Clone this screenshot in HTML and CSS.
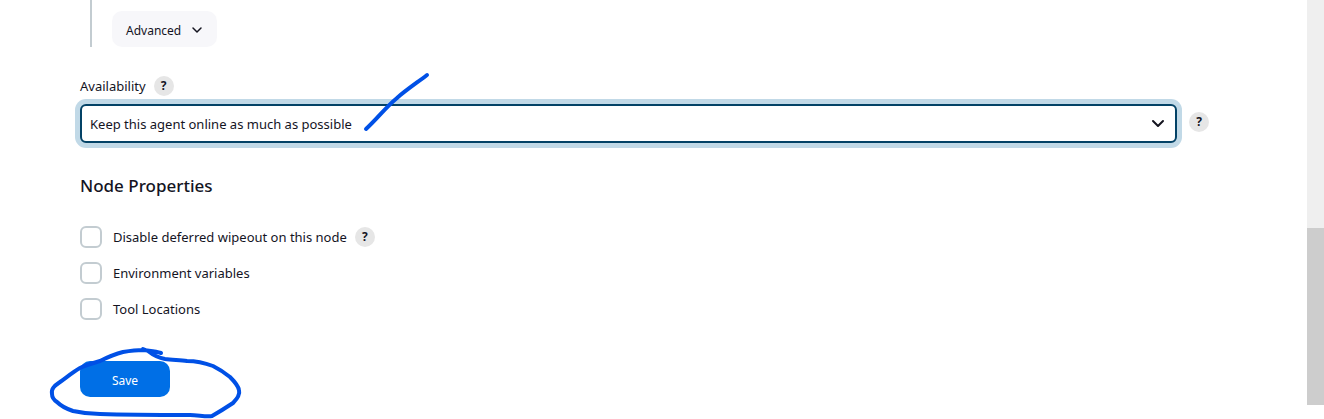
FILE: index.html
```html
<!DOCTYPE html>
<html lang="en">
<head>
<meta charset="utf-8">
<meta name="viewport" content="width=device-width, initial-scale=1">
<title>Configure node</title>
<link rel="stylesheet" href="styles.css">
</head>
<body>
<div class="page">
  <main class="content">
    <form class="form">
      <div class="nested">
        <button type="button" class="button-advanced">Advanced
          <svg class="chevron" viewBox="0 0 12 12" width="12" height="12" aria-hidden="true"><path d="M2 3l4 4 4-4"/></svg>
        </button>
      </div>

      <div class="label-row">
        <label for="availability">Availability</label>
        <button type="button" class="help" aria-label="Help for Availability">?</button>
      </div>
      <div class="select-row">
        <div class="select-wrap">
          <select id="availability" class="select">
            <option>Keep this agent online as much as possible</option>
          </select>
          <svg class="select-arrow" viewBox="0 0 14 14" width="14" height="14" aria-hidden="true"><path d="M2 4l5 5 5-5"/></svg>
        </div>
        <button type="button" class="help" aria-label="Help for this option">?</button>
        <svg class="ink ink-tick" viewBox="0 0 70 60" width="70" height="60" aria-hidden="true"><path d="M6 56C18 45 25 35 37 25C46 17 58 9 67 2"/></svg>
      </div>

      <h2 class="heading">Node Properties</h2>
      <div class="checks">
        <div class="check-row">
          <input type="checkbox" id="wipeout" class="checkbox">
          <label for="wipeout">Disable deferred wipeout on this node</label>
          <button type="button" class="help" aria-label="Help for Disable deferred wipeout">?</button>
        </div>
        <div class="check-row">
          <input type="checkbox" id="env" class="checkbox">
          <label for="env">Environment variables</label>
        </div>
        <div class="check-row">
          <input type="checkbox" id="tools" class="checkbox">
          <label for="tools">Tool Locations</label>
        </div>
      </div>

      <div class="actions">
        <button type="submit" class="button-save">Save</button>
        <svg class="ink ink-loop" viewBox="0 0 200 72" width="200" height="72" aria-hidden="true"><path d="M120 7C114 5 108 5 102 4C95 4 88 5 82 6C74 8 67 11 59 15C52 17 45 19 39 22C32 26 26 31 19 36C13 40 10 43 11 48C11 51 13 54 16 56C21 61 26 63 32 65C41 67 50 68 59 68C89 69 119 69 149 69C157 69 165 71 171 70C178 66 186 61 192 57C197 52 199 48 198 44C197 39 193 35 189 31C184 27 178 23 172 20C164 17 155 15 146 15C139 14 131 14 124 13C118 12 112 9 107 5L102 3"/></svg>
      </div>
    </form>
  </main>
  <div class="scrollbar" aria-hidden="true"><div class="scroll-thumb"></div></div>
</div>
</body>
</html>
```
FILE: styles.css
```css
* { box-sizing: border-box; }
body {
  margin: 0;
  background: #fff;
  color: #14141f;
  font: 13px/20px "Noto Sans", "Open Sans", sans-serif;
}
button, select { font: inherit; color: inherit; }
.page { display: flex; align-items: flex-start; min-height: 100vh; overflow: hidden; }
.content { flex: 1; min-width: 0; padding: 0 98px 22px 80px; }
.nested {
  margin-left: 10px;
  padding: 11px 0 0 20px;
  border-left: 2px solid #c3ccd1;
}
.button-advanced {
  display: flex;
  align-items: center;
  gap: 10px;
  height: 36px;
  padding: 3px 14px 0;
  border: 0;
  border-radius: 10px;
  background: #f7f7fa;
  font-size: 12px;
}
.chevron, .select-arrow {
  fill: none;
  stroke: #14141f;
  stroke-width: 2;
  stroke-linecap: round;
  stroke-linejoin: round;
}
.chevron { stroke-width: 1.5; }
.label-row { display: flex; align-items: center; gap: 8px; margin-top: 29px; }
.help {
  flex: none;
  width: 20px;
  height: 20px;
  padding: 0;
  border: 0;
  border-radius: 50%;
  background: #e6e6e6;
  font-size: 12px;
  font-weight: 700;
  line-height: 20px;
  text-align: center;
}
.select-row { position: relative; display: flex; align-items: center; gap: 12px; margin-top: 8px; }
.select-row .help { margin-bottom: 4px; }
.select-wrap { position: relative; flex: 1; display: flex; }
.select {
  appearance: none;
  width: 100%;
  height: 39px;
  padding: 0 36px 0 8px;
  border: 2px solid #034266;
  border-radius: 6px;
  background: #fff;
  box-shadow: 0 0 0 5px #c1d9e7;
  outline: 0;
}
.select-arrow { position: absolute; top: 13px; right: 12px; pointer-events: none; }
.heading { margin: 31px 0 0; font-size: 17px; font-weight: 500; line-height: 24px; }
.checks { display: grid; gap: 14px; margin-top: 28px; }
.check-row { display: flex; align-items: center; height: 22px; }
.check-row label { margin-left: 11px; }
.check-row .help { margin-left: 8px; }
.checkbox {
  appearance: none;
  width: 22px;
  height: 22px;
  margin: 0;
  border: 2px solid #c3ccd1;
  border-radius: 6px;
  background: #fff;
}
.actions { position: relative; display: flex; margin-top: 41px; }
.button-save {
  width: 90px;
  height: 36px;
  padding: 3px 0 0;
  border: 0;
  border-radius: 10px;
  background: #006fe6;
  color: #fff;
  font-size: 12px;
}
.ink {
  position: absolute;
  overflow: visible;
  fill: none;
  stroke: #0050e6;
  stroke-width: 4;
  stroke-linecap: round;
  stroke-linejoin: round;
  pointer-events: none;
}
.ink-tick { left: 280px; top: -31px; }
.ink-loop { left: -39px; top: -15px; }
.scrollbar {
  display: flex;
  align-items: flex-end;
  width: 17px;
  height: calc(100vh - 14px);
  background: #efefef;
}
.scroll-thumb { width: 100%; height: 177px; background: #cdcdcd; }
```
